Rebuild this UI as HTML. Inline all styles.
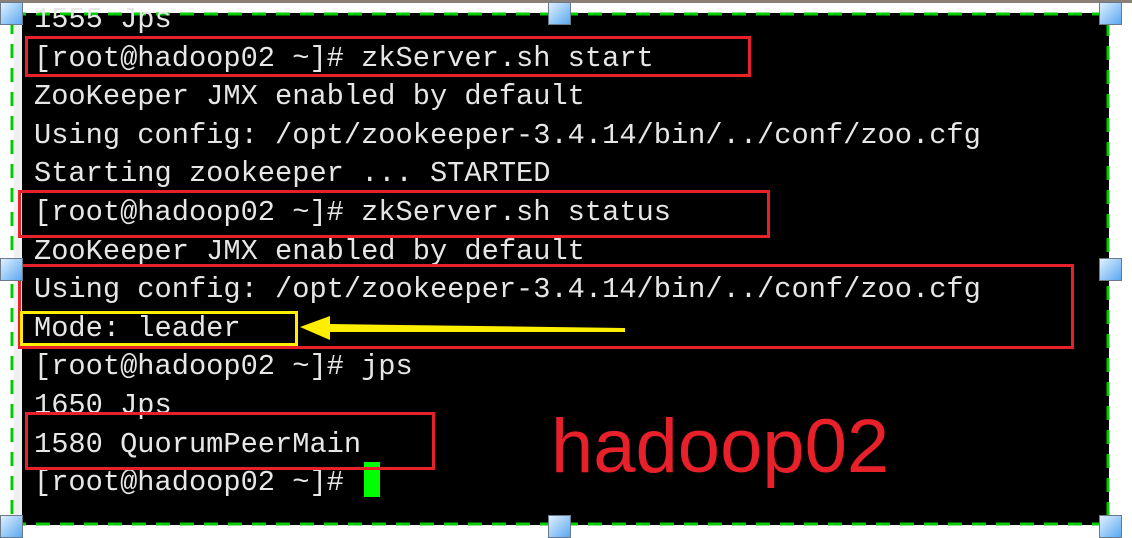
<!DOCTYPE html>
<html><head><style>
body{margin:0;width:1132px;height:535px;background:#fff;position:relative;overflow:hidden}
.top{position:absolute;left:0;top:0;width:1132px;height:3px;background:#8a7f76}
.term{position:absolute;left:22px;top:13px;width:1087px;height:512px;background:#000;overflow:hidden}
.lines{position:absolute;left:34px;top:1px;font-family:"Liberation Mono",monospace;font-size:28.7px;line-height:38.6px;color:#e6e6e6;white-space:pre}
.box{position:absolute;border:3px solid #e8202a}
.h{position:absolute;width:21px;height:21px;border:1px solid #6a7a8a;background:linear-gradient(135deg,#dff0ff,#5aa8f0)}
</style></head><body>
<div class="top"></div>
<div style="position:absolute;left:14px;top:13px;width:8px;height:512px;background:#f0f0f0"></div>
<div class="term"></div>
<svg style="position:absolute;left:0;top:0" width="1132" height="535">
<rect x="12" y="14" width="1096" height="510" fill="none" stroke="#00cc00" stroke-width="3" stroke-dasharray="14,10"/>
</svg>
<div class="lines">1555 Jps
[root@hadoop02 ~]# zkServer.sh start
ZooKeeper JMX enabled by default
Using config: /opt/zookeeper-3.4.14/bin/../conf/zoo.cfg
Starting zookeeper ... STARTED
[root@hadoop02 ~]# zkServer.sh status
ZooKeeper JMX enabled by default
Using config: /opt/zookeeper-3.4.14/bin/../conf/zoo.cfg
Mode: leader
[root@hadoop02 ~]# jps
1650 Jps
1580 QuorumPeerMain
[root@hadoop02 ~]# </div>
<div style="position:absolute;left:364px;top:462px;width:16px;height:35px;background:#00ff00"></div>
<div class="box" style="left:25px;top:36px;width:720px;height:35px"></div>
<div class="box" style="left:18px;top:190px;width:746px;height:42px"></div>
<div class="box" style="left:18px;top:264px;width:1050px;height:79px"></div>
<div class="box" style="left:25px;top:412px;width:404px;height:52px"></div>
<div style="position:absolute;left:20px;top:311px;width:272px;height:29px;border:3px solid #ffee00"></div>
<svg style="position:absolute;left:0;top:0" width="1132" height="535"><polygon points="300,327 330,316 330,324 625,328 625,332 330,332 330,340" fill="#ffee00"/></svg>
<div style="position:absolute;left:551px;top:402px;font-family:'Liberation Sans',sans-serif;font-size:76px;color:#e8202a;line-height:90px">hadoop02</div>
<div class="h" style="left:0;top:2px"></div>
<div class="h" style="left:548px;top:2px"></div>
<div class="h" style="left:1099px;top:2px"></div>
<div class="h" style="left:0;top:258px"></div>
<div class="h" style="left:1099px;top:258px"></div>
<div class="h" style="left:0;top:515px"></div>
<div class="h" style="left:548px;top:515px"></div>
<div class="h" style="left:1099px;top:515px"></div>
</body></html>
